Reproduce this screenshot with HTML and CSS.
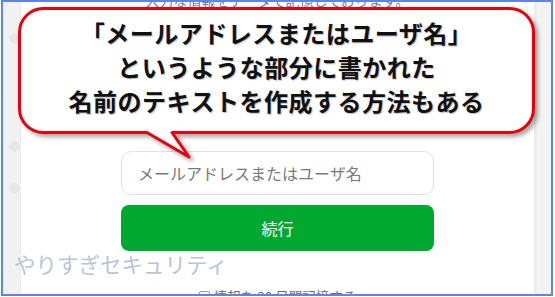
FILE: index.html
```html
<!DOCTYPE html>
<html lang="ja">
<head>
<meta charset="utf-8">
<title>ログイン</title>
<link rel="stylesheet" href="styles.css">
</head>
<body>
<div class="screen">
  <div class="frame">
    <div class="bg">
      <div class="strip strip-left">
        <span class="deco d1"></span>
        <span class="deco d2"></span>
        <span class="deco d3"></span>
      </div>
      <main class="panel">
        <p class="notice">入力な情報をデータで記憶しております。</p>
        <div class="form">
          <div class="field">メールアドレスまたはユーザ名</div>
          <button class="btn" type="button">続行</button>
        </div>
        <label class="remember"><span class="check"></span>情報を 30 日間記憶する</label>
      </main>
      <div class="strip strip-right"></div>
    </div>
  </div>

  <div class="watermark">やりすぎセキュリティ</div>

  <div class="callout">
    <svg class="callout-shape" width="555" height="170" viewBox="0 0 555 170" aria-hidden="true">
      <path d="M43.5 8.5 H509.5 A24 24 0 0 1 533.5 32.5 V108.5 A24 24 0 0 1 509.5 132.5 H172 L189 157 L147 132.5 H43.5 A24 24 0 0 1 19.5 108.5 V32.5 A24 24 0 0 1 43.5 8.5 Z" fill="#ffffff" stroke="#e8000b" stroke-width="3" stroke-linejoin="round"/>
    </svg>
    <div class="callout-text">
      <p>「メールアドレスまたはユーザ名」</p>
      <p>というような部分に書かれた</p>
      <p>名前のテキストを作成する方法もある</p>
    </div>
  </div>
</div>
</body>
</html>
```

FILE: styles.css
```css
* { box-sizing: border-box; }

html, body {
  margin: 0;
  padding: 0;
  background: #ffffff;
  font-family: "Noto Sans CJK JP", "Noto Sans", sans-serif;
}

.screen {
  position: relative;
  width: 555px;
  height: 297px;
  overflow: hidden;
  background: #ffffff;
}

.frame {
  margin-left: 1px;
  width: 552px;
  height: 296px;
  border: 2px solid #5b87e0;
  overflow: hidden;
}

.bg {
  display: flex;
  height: 100%;
}

.strip {
  background: #f1f1f1;
  position: relative;
  overflow: hidden;
}

.strip-left {
  width: 18px;
  border-right: 1px solid #ececec;
}

.strip-right {
  width: 17px;
  background: linear-gradient(90deg, #e9e9e9 0, #f3f3f3 4px, #f3f3f3 100%);
}

.deco {
  position: absolute;
  left: 7px;
  width: 9px;
  height: 9px;
  background: #e6e6e6;
  border-radius: 2px;
  transform: rotate(45deg);
}
.d1 { top: 32px; }
.d2 { top: 140px; }
.d3 { top: 182px; }

.panel {
  flex: 1;
  background: #ffffff;
  display: flex;
  flex-direction: column;
  align-items: center;
}

.notice {
  margin: -10px 0 0;
  font-size: 14px;
  line-height: 16px;
  color: #6b7db3;
  white-space: nowrap;
}

.form {
  margin-top: 143px;
  width: 313px;
  display: flex;
  flex-direction: column;
  gap: 10px;
}

.field {
  height: 44px;
  border: 1px solid #e2e2e2;
  border-radius: 10px;
  padding: 0 16px;
  display: flex;
  align-items: center;
  font-size: 16px;
  color: #7a7a7a;
  background: #ffffff;
}

.btn {
  height: 46px;
  border: 0;
  border-radius: 8px;
  background: #01a82f;
  color: #ffffff;
  font-family: inherit;
  font-size: 16px;
  padding: 0;
}

.remember {
  margin-top: 37px;
  display: flex;
  align-items: center;
  gap: 4px;
  font-size: 13.5px;
  line-height: 16px;
  color: #6e6e6e;
  white-space: nowrap;
}

.check {
  width: 11px;
  height: 11px;
  border: 1px solid #9a9a9a;
  border-radius: 2px;
  background: #fbfbfb;
}

.watermark {
  position: absolute;
  left: 14px;
  top: 249px;
  font-size: 21.5px;
  line-height: 30px;
  color: #b9c5d9;
  white-space: nowrap;
}

.callout {
  position: absolute;
  left: 0;
  top: 0;
  width: 555px;
  height: 170px;
}

.callout-shape {
  position: absolute;
  left: 0;
  top: 0;
  filter: drop-shadow(3px 3px 2px rgba(0, 0, 0, 0.35));
}

.callout-text {
  position: absolute;
  left: 19px;
  top: 16px;
  width: 515px;
  text-align: center;
  font-size: 24px;
  letter-spacing: 0.5px;
  font-weight: 700;
  line-height: 34px;
  color: #111111;
  text-shadow: 1px 1px 1px rgba(0, 0, 0, 0.25);
}

.callout-text p {
  margin: 0;
  white-space: nowrap;
}
```
